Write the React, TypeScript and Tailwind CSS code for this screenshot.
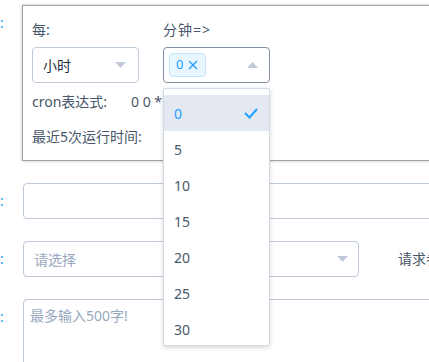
const minutes = ['0', '5', '10', '15', '20', '25', '30'];

function CaretDown() {
  return (
    <svg width="11" height="6" viewBox="0 0 11 6" className="shrink-0">
      <polygon points="0,0 11,0 5.5,6" fill="#bfcbd9" />
    </svg>
  );
}

function CaretUp() {
  return (
    <svg width="11" height="6" viewBox="0 0 11 6" className="shrink-0">
      <polygon points="0,6 11,6 5.5,0" fill="#bfcbd9" />
    </svg>
  );
}

export default function App() {
  return (
    <div className="relative h-[362px] w-[429px] overflow-hidden bg-white font-['Noto_Sans','Noto_Sans_CJK_SC',sans-serif] text-[14px]">
      <div className="pt-[5px]">
        {/* cron panel row */}
        <div className="mb-[22px] flex">
          <div className="w-[22px] shrink-0 leading-[36px] text-[#20a0ff]">:</div>
          <div className="h-[156px] w-[440px] shrink-0 border border-[#a3a3a3] bg-white pl-[9px] shadow-[0_0_3px_rgba(0,0,0,0.25)]">
            <div className="flex gap-[24px]">
              <div className="w-[107px]">
                <div className="mt-[14px] leading-[20px] text-[#48576a]">每:</div>
                <div className="mt-[7px] flex h-[36px] items-center justify-between rounded-[4px] border border-[#bfcbd9] pl-[10px] pr-[12px] text-[#1f2d3d]">
                  <span>小时</span>
                  <CaretDown />
                </div>
              </div>
              <div className="relative w-[107px]">
                <div className="mt-[14px] leading-[20px] tracking-[1px] text-[#48576a]">分钟=&gt;</div>
                <div className="mt-[7px] flex h-[36px] items-center justify-between rounded-[4px] border border-[#8391a5] pl-[5px] pr-[11px]">
                  <span className="inline-flex h-[24px] w-[37px] items-center gap-[5px] rounded-[4px] border border-[#c3e6ff] bg-[#e8f6ff] pl-[6px] text-[13px] text-[#20a0ff]">
                    <span>0</span>
                    <svg width="10" height="10" viewBox="0 0 10 10">
                      <path d="M1 1 L9 9 M9 1 L1 9" stroke="#20a0ff" strokeWidth="1.3" />
                    </svg>
                  </span>
                  <CaretUp />
                </div>
                <div className="absolute left-0 top-[82px] z-10 h-[258px] w-[107px] overflow-hidden rounded-[2px] border border-[#d1dbe5] bg-white pt-[6px] shadow-[0_2px_4px_rgba(0,0,0,0.12),0_0_6px_rgba(0,0,0,0.04)]">
                  {minutes.map((m, i) => (
                    <div
                      key={m}
                      className={
                        i === 0
                          ? 'flex h-[36px] items-center justify-between bg-[#e4e8f1] pl-[10px] pr-[11px] text-[#20a0ff]'
                          : 'flex h-[36px] items-center pl-[10px] text-[#48576a]'
                      }
                    >
                      <span>{m}</span>
                      {i === 0 && (
                        <svg width="14" height="12" viewBox="0 0 14 12">
                          <path d="M1 6 L5.5 10.5 L13 2" fill="none" stroke="#20a0ff" strokeWidth="2" />
                        </svg>
                      )}
                    </div>
                  ))}
                </div>
              </div>
            </div>
            <div className="mt-[9px] flex leading-[20px] text-[#48576a]">
              <span className="w-[99px]">cron表达式:</span>
              <span>0 0 * * * ?</span>
            </div>
            <div className="mt-[15px] leading-[20px] text-[#48576a]">最近5次运行时间:</div>
          </div>
        </div>

        {/* plain input row */}
        <div className="mb-[22px] flex">
          <div className="w-[23px] shrink-0 leading-[36px] text-[#20a0ff]">:</div>
          <div className="h-[36px] w-[420px] shrink-0 rounded-[4px] border border-[#bfcbd9]" />
        </div>

        {/* select row */}
        <div className="mb-[22px] flex items-center">
          <div className="w-[23px] shrink-0 leading-[36px] text-[#20a0ff]">:</div>
          <div className="flex h-[36px] w-[336px] shrink-0 items-center justify-between rounded-[4px] border border-[#bfcbd9] pl-[10px] pr-[10px] text-[#97a8be]">
            <span>请选择</span>
            <CaretDown />
          </div>
          <div className="ml-[39px] shrink-0 whitespace-nowrap leading-[36px] text-[#48576a]">请求参数:</div>
        </div>

        {/* textarea row */}
        <div className="flex">
          <div className="w-[23px] shrink-0 leading-[36px] text-[#20a0ff]">:</div>
          <div className="h-[80px] w-[420px] shrink-0 rounded-[4px] border border-[#bfcbd9] px-[6px] py-[5px] leading-[21px] text-[#97a8be]">
            最多输入500字!
          </div>
        </div>
      </div>
    </div>
  );
}
